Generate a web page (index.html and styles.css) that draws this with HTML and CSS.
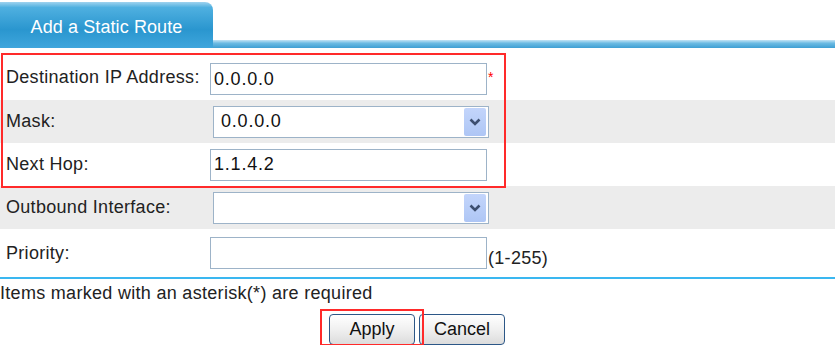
FILE: index.html
```html
<!DOCTYPE html>
<html>
<head>
    <link rel="stylesheet" href="styles.css">
</head>
<body>
    <div class="tabbar">
        <div class="tab">Add a Static Route</div>
    </div>
    <div class="form">
        <div class="row row-first">
            <label class="label">Destination IP Address:</label>
            <input class="field" type="text" value="0.0.0.0"><span class="star">*</span>
        </div>
        <div class="row gray">
            <label class="label">Mask:</label>
            <div class="select">
                <span class="select-value">0.0.0.0</span>
                <span class="select-btn"><svg width="12" height="8" viewBox="0 0 12 8"><path d="M1.5 1.5 L6 6 L10.5 1.5" fill="none" stroke="#3d4f70" stroke-width="2.6"/></svg></span>
            </div>
        </div>
        <div class="row">
            <label class="label">Next Hop:</label>
            <input class="field" type="text" value="1.1.4.2">
        </div>
        <div class="row gray">
            <label class="label">Outbound Interface:</label>
            <div class="select">
                <span class="select-value"></span>
                <span class="select-btn"><svg width="12" height="8" viewBox="0 0 12 8"><path d="M1.5 1.5 L6 6 L10.5 1.5" fill="none" stroke="#3d4f70" stroke-width="2.6"/></svg></span>
            </div>
        </div>
        <div class="row row-last">
            <label class="label">Priority:</label>
            <input class="field" type="text" value=""><span class="hint">(1-255)</span>
        </div>
        <div class="mark mark-fields"></div>
    </div>
    <div class="note">Items marked with an asterisk(*) are required</div>
    <div class="buttons">
        <button class="btn">Apply</button>
        <button class="btn">Cancel</button>
        <div class="mark mark-apply"></div>
    </div>
</body>
</html>
```
FILE: styles.css
```css
body {
    margin: 0;
    font-family: "Liberation Sans", Arial, sans-serif;
    font-size: 18px;
    letter-spacing: 0.3px;
    color: #222;
    background: #fff;
}
.tabbar {
    display: flex;
    align-items: flex-end;
    height: 48px;
    background: linear-gradient(#c4e4f5, #6cbbe3 40%, #3e9fd3) left bottom / 100% 8px no-repeat;
}
.tab {
    width: 213px;
    height: 46px;
    box-sizing: border-box;
    padding-top: 8px;
    border-radius: 0 8px 0 0;
    background: linear-gradient(#9fd3ef, #4fb0e0 12%, #2a96cf 60%, #3fa6dc);
    color: #fff;
    font-size: 18px;
    letter-spacing: 0.1px;
    text-align: center;
    line-height: 34px;
}
.form {
    position: relative;
    padding-top: 6px;
}
.row {
    display: flex;
    align-items: center;
    height: 43px;
}
.row-first {
    height: 46px;
}
.row-first .field {
    margin-top: 4px;
}
.row-last {
    height: 48px;
    border-bottom: 2px solid #3ab7f0;
}
.gray {
    background: #ececec;
}
.label {
    width: 204px;
    padding-left: 6px;
}
.field {
    width: 277px;
    height: 32px;
    box-sizing: border-box;
    margin: 0;
    padding: 0 3px;
    border: 1px solid #9db3c8;
    font-family: "Liberation Sans", Arial, sans-serif;
    font-size: 18px;
    letter-spacing: 0.8px;
    color: #111;
    outline: none;
}
.star {
    color: #f00;
    font-size: 14px;
    margin-left: 1px;
}
.hint {
    margin-left: 1px;
    margin-top: 10px;
}
.select {
    display: flex;
    align-items: center;
    justify-content: space-between;
    width: 276px;
    height: 32px;
    box-sizing: border-box;
    margin-left: 3px;
    padding: 0 2px 0 7px;
    border: 1px solid #9db3c8;
    background: #fff;
    font-size: 18px;
    letter-spacing: 0.8px;
    color: #111;
}
.select-btn {
    display: flex;
    align-items: center;
    justify-content: center;
    width: 22px;
    height: 28px;
    border-radius: 2px;
    background: linear-gradient(#c3d5fb, #aec6f5);
}
.mark {
    position: absolute;
    border: 2px solid #ff2a2a;
}
.mark-fields {
    left: 1px;
    top: 5px;
    width: 501px;
    height: 131px;
}
.note {
    padding: 4px 0 0 0;
    height: 26px;
}
.buttons {
    position: relative;
    display: flex;
    gap: 4px;
    padding: 5px 0 0 329px;
}
.btn {
    width: 86px;
    height: 31px;
    border: 1px solid #2c5787;
    border-radius: 4px;
    background: linear-gradient(#ffffff, #f0f0f0 50%, #dcdcdc);
    font-family: "Liberation Sans", Arial, sans-serif;
    font-size: 18px;
    color: #111;
}
.mark-apply {
    left: 320px;
    top: 0;
    width: 100px;
    height: 33px;
}
```
